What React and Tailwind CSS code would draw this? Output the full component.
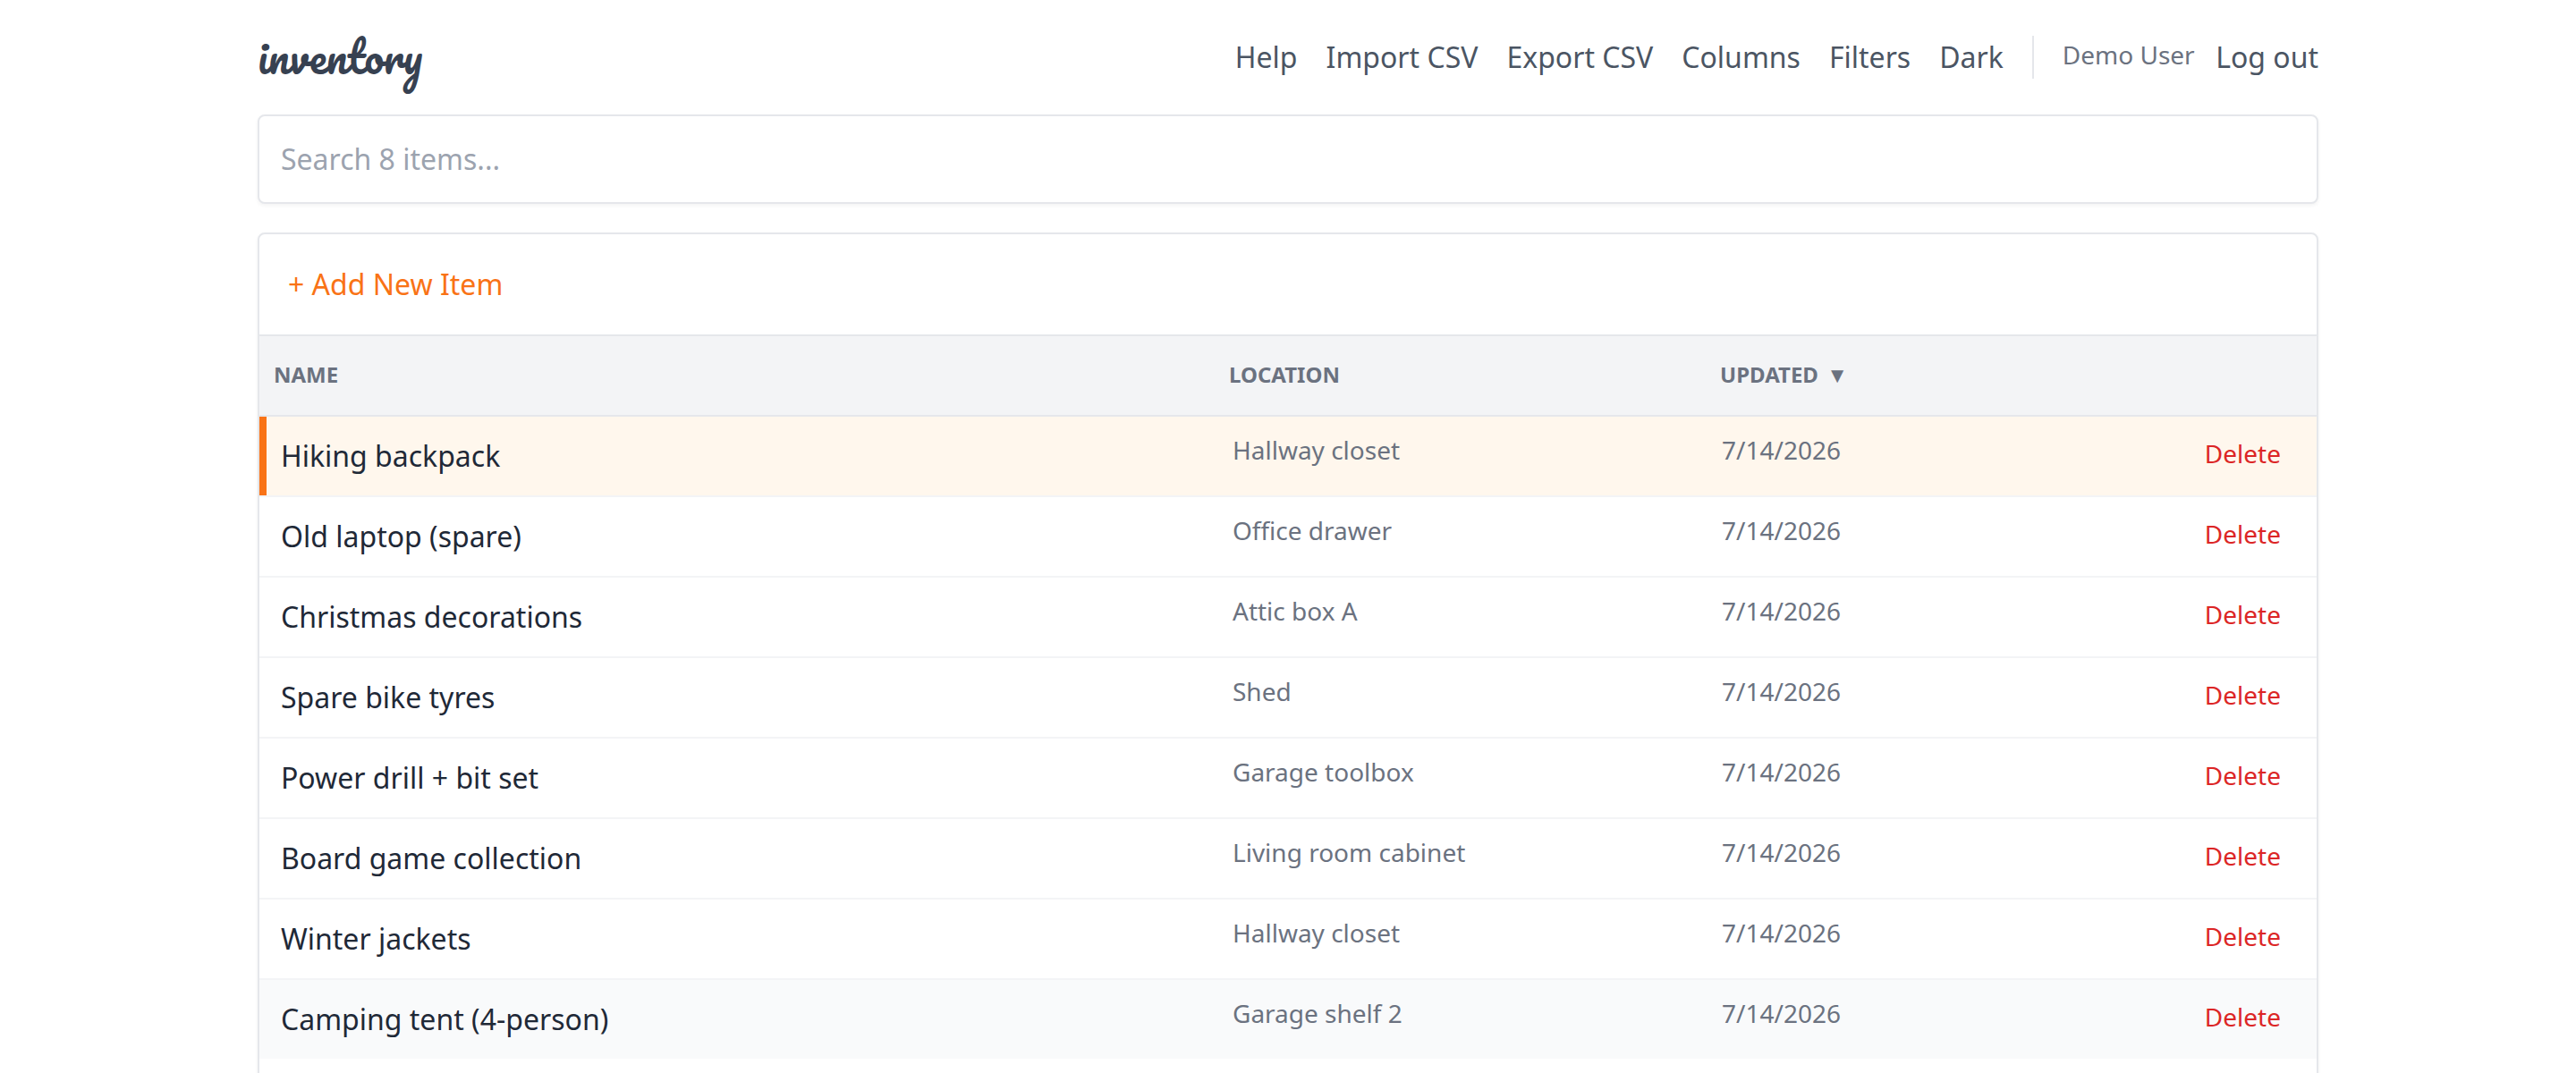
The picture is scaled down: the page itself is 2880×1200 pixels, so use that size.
const items = [
  ["Hiking backpack", "Hallway closet"],
  ["Old laptop (spare)", "Office drawer"],
  ["Christmas decorations", "Attic box A"],
  ["Spare bike tyres", "Shed"],
  ["Power drill + bit set", "Garage toolbox"],
  ["Board game collection", "Living room cabinet"],
  ["Winter jackets", "Hallway closet"],
  ["Camping tent (4-person)", "Garage shelf 2"],
];

const links = ["Help", "Import CSV", "Export CSV", "Columns", "Filters", "Dark"];

const columns = "grid grid-cols-[1084px_549px_1fr_auto]";

function Header() {
  return (
    <header className="flex h-32 items-start justify-between pt-10">
      <h1 className="-mt-[5px] font-['Pacifico','Lato',cursive] text-[48px] leading-[56px] font-normal text-[#374151]">
        inventory
      </h1>
      <nav className="flex items-start gap-8 text-[32px] leading-[48px] text-[#4b5563]">
        {links.map((label) => (
          <button key={label}>{label}</button>
        ))}
        <div className="flex items-start border-l-2 border-[#e5e7eb] pl-8">
          <span className="mt-px mr-[23.5px] text-[28px] leading-10 text-[#6b7280]">Demo User</span>
          <button>Log out</button>
        </div>
      </nav>
    </header>
  );
}

function Row({ name, location, selected, last }) {
  const tone = selected ? "bg-[#fff7ed]" : last ? "bg-[#f9fafb]" : "bg-white";
  return (
    <div className={last ? "" : "border-b-2 border-[#f3f4f6]"}>
      <div className={`${columns} h-[88px] items-start ${tone} ${selected ? "shadow-[inset_8px_0_0_#f97316]" : ""}`}>
        <div className="py-5 pl-6 text-[32px] leading-[48px] text-[#1f2937]">{name}</div>
        <div className="pt-[17px] pl-1 text-[28px] leading-10 text-[#6b7280]">{location}</div>
        <div className="pt-[17px] pl-[2px] text-[28px] leading-10 text-[#6b7280]">7/14/2026</div>
        <button className="mt-[21px] mr-10 text-[28px] leading-10 text-[#dc2626]">Delete</button>
      </div>
    </div>
  );
}

export default function App() {
  return (
    <div className="h-[1200px] overflow-hidden bg-white font-['Noto_Sans',sans-serif]">
      <div className="mx-auto w-[2304px]">
        <Header />
        <input
          className="block h-[100px] w-full rounded-lg border-2 border-[#e5e7eb] bg-white px-6 pb-0.5 text-[32px] leading-[48px] shadow-[0_2px_4px_rgba(0,0,0,0.05)] placeholder:text-[#9ca3af]"
          placeholder="Search 8 items..."
        />
        <main className="mt-8 h-[1100px] rounded-lg border-2 border-[#e5e7eb] bg-white shadow-[0_2px_4px_rgba(0,0,0,0.05)]">
          <div className="flex h-[114px] items-center border-b-2 border-[#e5e7eb] px-8 text-[32px] leading-[48px] text-[#f97316]">
            <button>+ Add New Item</button>
          </div>
          <div className={`${columns} h-[90px] border-b-2 border-[#e5e7eb] bg-[#f3f4f6] pt-[27px] text-[24px] leading-8 font-bold text-[#6b7280]`}>
            <div className="pl-4">NAME</div>
            <div>LOCATION</div>
            <div>UPDATED <span className="ml-[3px]">▼</span></div>
          </div>
          {items.map(([name, location], i) => (
            <Row key={name} name={name} location={location} selected={i === 0} last={i === items.length - 1} />
          ))}
        </main>
      </div>
    </div>
  );
}
